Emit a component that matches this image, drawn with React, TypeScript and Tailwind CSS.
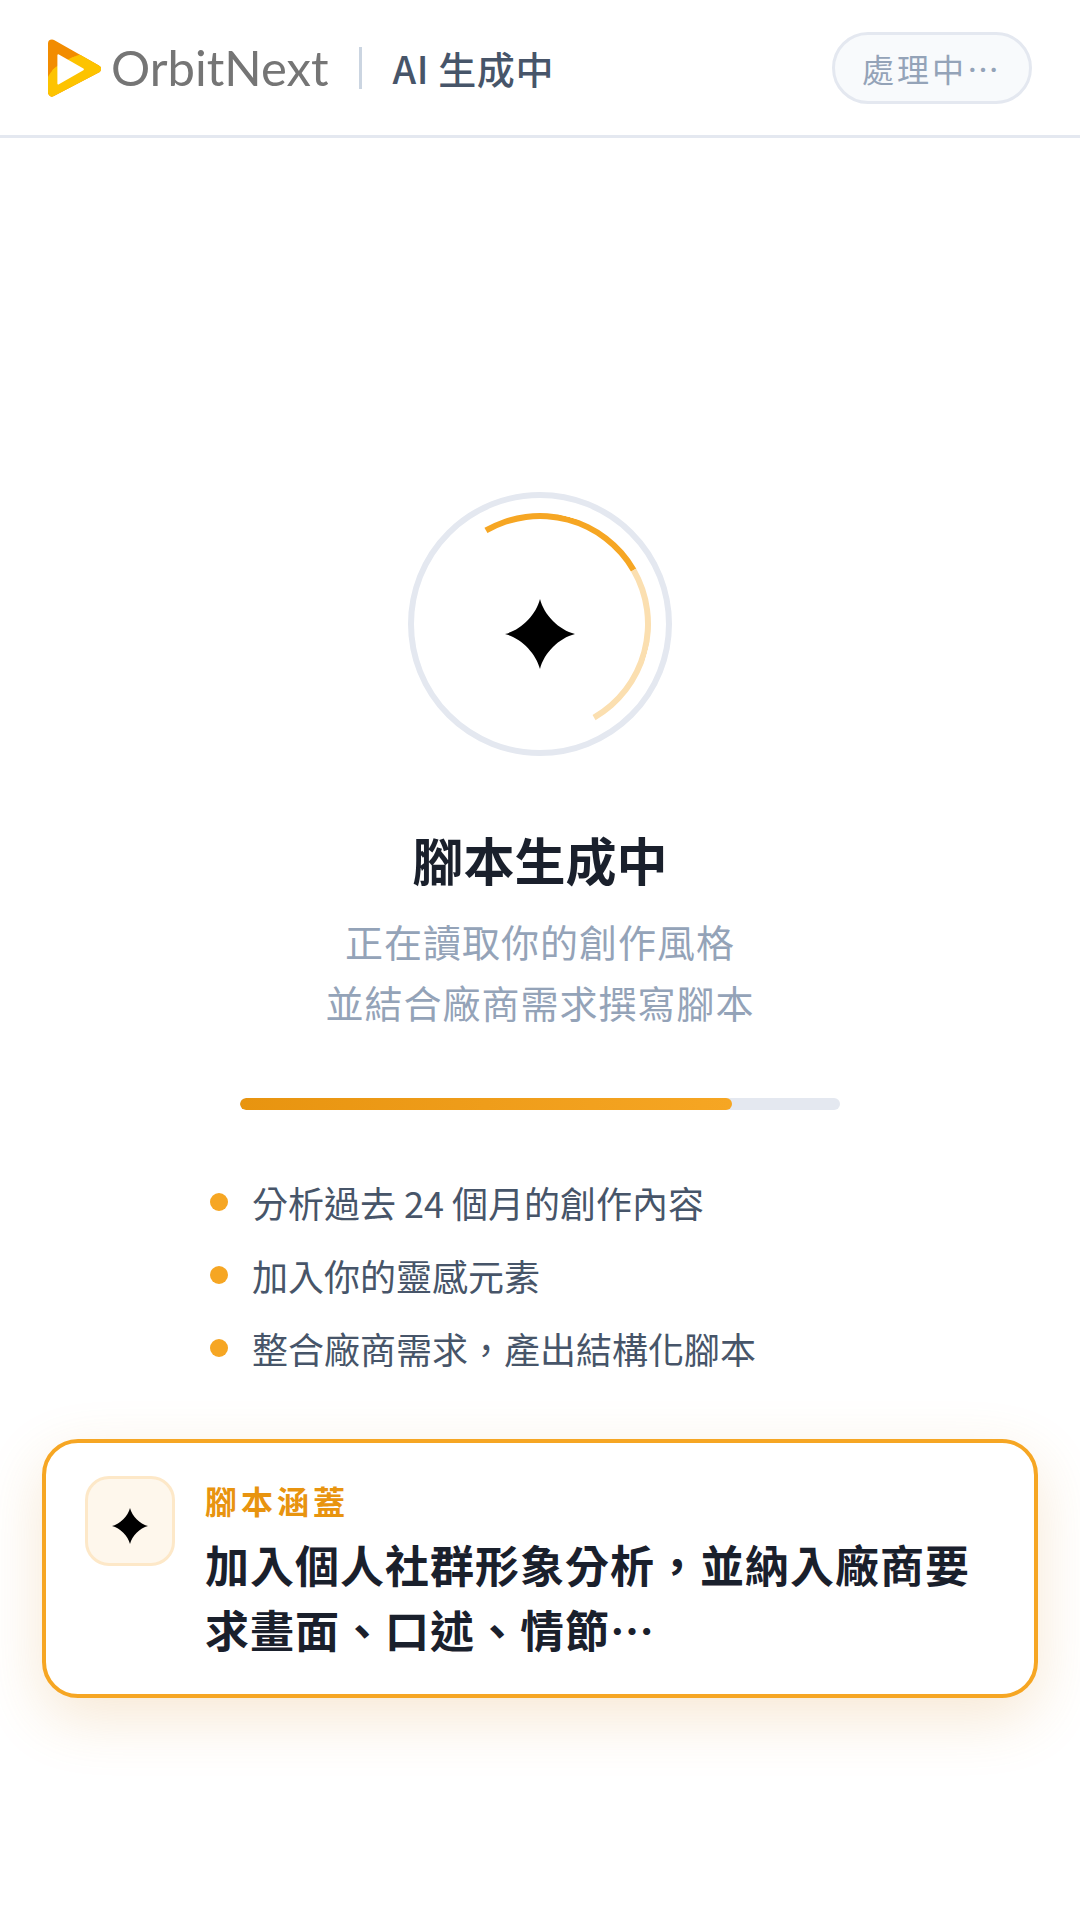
const FONT = 'font-["Noto_Sans_CJK_TC","Noto_Sans",sans-serif]'

function Sparkle({ className }: { className: string }) {
  return (
    <svg viewBox="0 0 70 70" className={className} fill="#000">
      <path d="M35 0C39 16 54 31 70 35C54 39 39 54 35 70C31 54 16 39 0 35C16 31 31 16 35 0Z" />
    </svg>
  )
}

function Logo() {
  return (
    <svg viewBox="0 0 158 170" className="w-[53px] h-[58px] shrink-0">
      <defs>
        <clipPath id="logo-yellow">
          <path d="M-5 175V125C5 85 50 60 105 42L170 90L20 180Z" />
        </clipPath>
      </defs>
      <path d="M12 12L146 88L12 158Z" fill="#f28c00" stroke="#f28c00" strokeWidth="24" strokeLinejoin="round" />
      <path d="M12 12L146 88L12 158Z" fill="#fdc300" stroke="#fdc300" strokeWidth="24" strokeLinejoin="round" clipPath="url(#logo-yellow)" />
      <path d="M31 47L104 89L31 131Z" fill="#fff" stroke="#fff" strokeWidth="6" strokeLinejoin="round" />
    </svg>
  )
}

const steps = ['分析過去 24 個月的創作內容', '加入你的靈感元素', '整合廠商需求，產出結構化腳本']

export default function App() {
  return (
    <div className={`w-[1080px] h-[1920px] bg-white flex flex-col overflow-hidden ${FONT}`}>
      {/* Header */}
      <header className="h-[138px] shrink-0 border-b-[3px] border-[#e4e8f0] pl-[48px] pr-[48px] flex items-center">
        <Logo />
        <span className="ml-[10px] text-[49px] leading-none text-[#757575] font-['Lato',sans-serif] font-normal">OrbitNext</span>
        <div className="ml-[30px] w-[3px] h-[42px] bg-[#cbd5e1]" />
        <span className="ml-[31px] text-[38px] tracking-[0.6px] font-medium text-[#475569]">AI 生成中</span>
        <div className="ml-auto h-[72px] w-[200px] rounded-full border-[3px] border-[#e4e8f0] bg-[#f8fafc] flex items-center justify-center text-[32px] tracking-[3px] text-[#94a3b8]">
          處理中⋯
        </div>
      </header>

      {/* Body */}
      <main className="flex-1 flex flex-col items-center pt-[354px]">
        <div className="relative w-[264px] h-[264px] rounded-full border-[6px] border-[#e4e8f0] flex items-center justify-center">
          <div className="absolute inset-[15px] rounded-full border-[6px] border-transparent border-t-[#f6a623] border-r-[#fbdfb0] rotate-[15deg]" />
          <Sparkle className="w-[70px] h-[70px] mt-[20px]" />
        </div>

        <h1 className="mt-[64px] text-[51px] leading-[78px] font-bold text-[#1a202c]">腳本生成中</h1>
        <p className="mt-[12px] text-[38px] leading-[61px] tracking-[1px] text-[#94a3b8] text-center">
          正在讀取你的創作風格
          <br />
          並結合廠商需求撰寫腳本
        </p>

        <div className="mt-[66px] w-[600px] h-[12px] rounded-full bg-[#e4e8f0] overflow-hidden">
          <div className="w-[82%] h-full rounded-full bg-gradient-to-r from-[#e8940f] to-[#f6a623]" />
        </div>

        <ul className="mt-[66px] w-[660px] flex flex-col gap-[21px]">
          {steps.map((s) => (
            <li key={s} className="flex items-center gap-[24px] h-[52px] text-[36px] leading-[52px] text-[#475569]">
              <span className="w-[18px] h-[18px] rounded-full bg-[#f6a623] shrink-0" />
              {s}
            </li>
          ))}
        </ul>

        {/* Card */}
        <div className="mt-[65px] w-[996px] h-[259px] rounded-[36px] border-[4px] border-[#f6a623] bg-white shadow-[0_20px_60px_rgba(214,140,40,0.2)] pl-[39px] pr-[40px] pt-[33px] flex gap-[30px]">
          <div className="w-[90px] h-[90px] shrink-0 rounded-[24px] border-[3px] border-[#fde8c8] bg-[#fef7ec] flex items-center justify-center">
            <Sparkle className="w-[36px] h-[36px] mt-[10px]" />
          </div>
          <div className="min-w-0 pt-[1px]">
            <div className="text-[32px] leading-[46px] font-bold tracking-[4px] text-[#e8940f]">腳本涵蓋</div>
            <div className="mt-[9px] text-[44px] leading-[65px] font-bold tracking-[1px] text-[#1a202c]">
              加入個人社群形象分析，並納入廠商要求畫面、口述、情節⋯
            </div>
          </div>
        </div>
      </main>
    </div>
  )
}
